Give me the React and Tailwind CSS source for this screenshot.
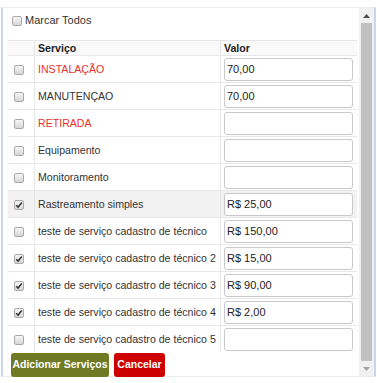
const rows = [
  { name: 'INSTALAÇÃO', value: '70,00', red: true },
  { name: 'MANUTENÇAO', value: '70,00' },
  { name: 'RETIRADA', value: '', red: true },
  { name: 'Equipamento', value: '' },
  { name: 'Monitoramento', value: '' },
  { name: 'Rastreamento simples', value: 'R$ 25,00', checked: true, hover: true },
  { name: 'teste de serviço cadastro de técnico', value: 'R$ 150,00' },
  { name: 'teste de serviço cadastro de técnico 2', value: 'R$ 15,00', checked: true },
  { name: 'teste de serviço cadastro de técnico 3', value: 'R$ 90,00', checked: true },
  { name: 'teste de serviço cadastro de técnico 4', value: 'R$ 2,00', checked: true },
  { name: 'teste de serviço cadastro de técnico 5', value: '' },
]

function Check({ checked }) {
  return (
    <span className="w-[10px] h-[10px] rounded-[2px] border border-[#a9a9a9] bg-gradient-to-b from-[#f6f6f6] to-[#d6d6d6] flex items-center justify-center shrink-0">
      {checked && (
        <svg width="8" height="8" viewBox="0 0 8 8">
          <path d="M1.2 4.2 L3.1 6.1 L6.8 1.6" fill="none" stroke="#333" strokeWidth="1.5" />
        </svg>
      )}
    </span>
  )
}

export default function App() {
  return (
    <div className="w-[377px] h-[383px] bg-white text-[10.6px] text-[#333]" style={{ fontFamily: '"Liberation Sans", Arial, sans-serif' }}>
      <div className="pt-[7px] px-[1px]">
        <div className="h-[370px] flex border-t border-[#ececec] border-b border-b-[#ececec] border-l-2 border-l-[#c8d7ec] border-r-2 border-r-[#c8d7ec]">
          <div className="flex-1 pl-[5px] pt-[6px]">
            <label className="flex items-center gap-[3px] h-[13px] pl-[4px]">
              <Check />
              <span className="text-[11px] text-[#333]">Marcar Todos</span>
            </label>
            <div className="mt-[13px] w-[349px]">
              <div className="flex h-[15px] bg-[#f9f9f9] border-t border-[#e6e6e6] font-bold text-[#222]">
                <div className="w-[27px] border-r border-[#e6e6e6]" />
                <div className="w-[186px] pl-[3px] border-r border-[#e6e6e6] leading-[15px]">Serviço</div>
                <div className="flex-1 pl-[3px] leading-[15px]">Valor</div>
              </div>
              {rows.map((r, i) => (
                <div key={i} className={`flex h-[27px] border-t border-[#e8e8e8] ${r.hover ? 'bg-[#f2f2f2]' : 'bg-white'}`}>
                  <div className="w-[27px] border-r border-[#e6e6e6] flex items-center pl-[6px] pt-[1px]">
                    <Check checked={r.checked} />
                  </div>
                  <div className={`w-[186px] pl-[3px] pt-[1px] border-r border-[#e6e6e6] flex items-center whitespace-nowrap overflow-hidden ${r.red ? 'text-[#e8312b]' : 'text-[#333]'}`}>
                    {r.name}
                  </div>
                  <div className="flex-1 flex items-center pl-[3px]">
                    <div className="w-[129px] h-[23px] rounded-[3px] border border-[#c9c9c9] bg-white flex items-center pl-[2px] pt-[1px] text-[11px] text-[#222]">
                      {r.value}
                    </div>
                  </div>
                </div>
              ))}
              <div className="flex gap-[5px] pl-[3px] pt-[1px]">
                <button className="h-[24px] w-[98px] rounded-[3px] bg-[#6e7b24] text-white font-bold text-[10.5px] whitespace-nowrap">Adicionar Serviços</button>
                <button className="h-[24px] w-[51px] rounded-[3px] bg-[#cc0000] text-white font-bold text-[10.5px] whitespace-nowrap">Cancelar</button>
              </div>
            </div>
          </div>
          <div className="w-[15px] ml-[2px] bg-[#f1f1f1] flex flex-col items-center">
            <div className="h-[15px] flex items-center justify-center">
              <svg width="7" height="4" viewBox="0 0 7 4"><path d="M0 4 L3.5 0 L7 4 Z" fill="#505050" /></svg>
            </div>
            <div className="flex-1 w-[11px] bg-[#c1c1c1]" />
            <div className="h-[15px] flex items-center justify-center">
              <svg width="7" height="4" viewBox="0 0 7 4"><path d="M0 0 L3.5 4 L7 0 Z" fill="#a3a3a3" /></svg>
            </div>
          </div>
        </div>
      </div>
    </div>
  )
}
